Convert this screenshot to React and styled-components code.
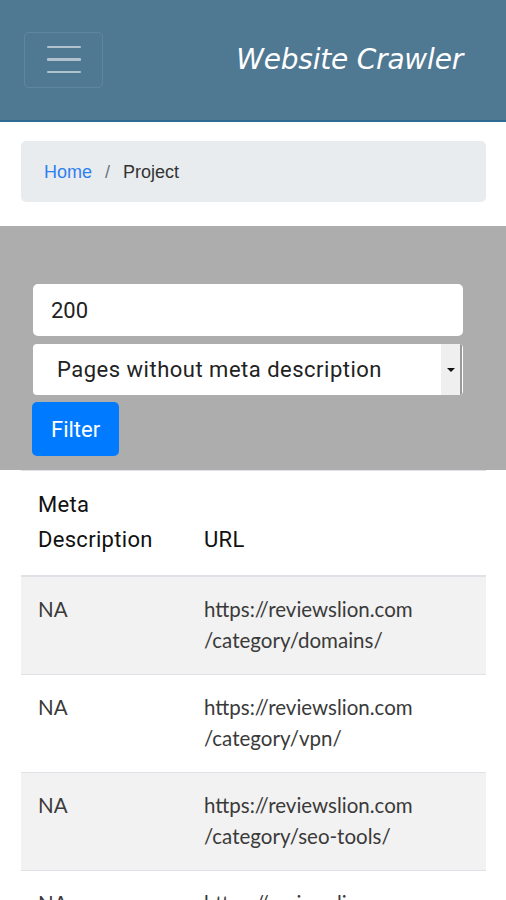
import React from "react";
import styled, { createGlobalStyle } from "styled-components";

const Global = createGlobalStyle`
  html, body { margin: 0; padding: 0; background: #fff; }
  body { font-family: Roboto, "Liberation Sans", Arial, sans-serif; color: #212529; }
  * { box-sizing: border-box; }
`;

const Header = styled.header`
  height: 122px;
  background: #4f7893;
  border-bottom: 2px solid #2f6a93;
  display: flex;
  align-items: center;
  justify-content: space-between;
  padding: 0 43px 0 24px;
`;

const Toggler = styled.button`
  width: 79px;
  height: 56px;
  border: 1px solid rgba(255, 255, 255, 0.1);
  border-radius: 5px;
  background: transparent;
  display: flex;
  flex-direction: column;
  justify-content: center;
  align-items: center;
  gap: 10px;
  padding: 0;
  margin-top: -1px;
`;

const Bar = styled.span`
  display: block;
  width: 34px;
  height: 2.5px;
  background: rgba(255, 255, 255, 0.55);
  border-radius: 1px;
`;

const Brand = styled.div`
  font-family: "DejaVu Sans", Verdana, sans-serif;
  font-style: italic;
  font-size: 28px;
  color: #fff;
  letter-spacing: -0.2px;
  margin-top: -2px;
`;

const Main = styled.main`
  padding-top: 19px;
`;

const Crumbs = styled.nav`
  margin: 0 20px 0 21px;
  height: 61px;
  background: #e9ecef;
  border-radius: 5px;
  display: flex;
  align-items: center;
  padding: 2px 23px 0;
  font-family: "Liberation Sans", Arial, sans-serif;
  font-size: 18px;
  color: #333;
`;

const CrumbLink = styled.a`
  color: #2f7ff0;
  text-decoration: none;
`;

const Sep = styled.span`
  color: #6c757d;
  padding: 0 13px;
`;

const FilterPanel = styled.section`
  margin-top: 24px;
  background: #adadad;
  padding: 58px 43px 14px 33px;
  display: flex;
  flex-direction: column;
  align-items: flex-start;
`;

const TextInput = styled.div`
  width: 100%;
  height: 52px;
  background: #fff;
  border-radius: 5px;
  display: flex;
  align-items: center;
  padding: 0 18px;
  font-size: 22px;
  color: #222;
`;

const Select = styled.div`
  width: 100%;
  height: 51px;
  margin-top: 8px;
  background: #fff;
  border-radius: 4px;
  display: flex;
  align-items: stretch;
  font-size: 22px;
  letter-spacing: 0.5px;
  color: #222;
  overflow: hidden;
`;

const SelectText = styled.div`
  flex: 1;
  display: flex;
  align-items: center;
  padding-left: 24px;
`;

const SelectArrow = styled.div`
  width: 21px;
  margin-right: 1px;
  background: #efefef;
  border-right: 2px solid #9a9a9a;
  display: flex;
  align-items: center;
  justify-content: center;
  &::after {
    content: "";
    border-left: 4px solid transparent;
    border-right: 4px solid transparent;
    border-top: 4px solid #111;
  }
`;

const Button = styled.button`
  margin-top: 7px;
  margin-left: -1px;
  height: 54px;
  padding: 0 19px;
  background: #007bff;
  color: #fff;
  border: none;
  border-radius: 5px;
  font-family: Roboto, sans-serif;
  font-size: 22px;
`;

const Table = styled.table`
  margin: 0 20px 0 21px;
  width: 465px;
  border-collapse: collapse;
  border-top: 1px solid #dee2e6;
`;

const Th = styled.th`
  text-align: left;
  vertical-align: bottom;
  font-weight: 400;
  font-size: 22px;
  letter-spacing: 0.3px;
  line-height: 35px;
  padding: 16px 17px 18px;
  border-bottom: 2px solid #dee2e6;
  color: #111;
  width: ${(p) => p.$w || "auto"};
`;

const Row = styled.tr`
  background: ${(p) => (p.$striped ? "#f2f2f2" : "#fff")};
  border-bottom: 1px solid #dee2e6;
`;

const Td = styled.td`
  vertical-align: top;
  font-family: Lato, "Open Sans", sans-serif;
  font-size: 20.5px;
  line-height: 31px;
  padding: 17px 17px 18px 17px;
  color: #3a3a3a;
`;

const rows = [
  "/category/domains/",
  "/category/vpn/",
  "/category/seo-tools/",
  "/category/hosting/",
];

export default function App() {
  return (
    <>
      <Global />
      <Header>
        <Toggler aria-label="Toggle navigation">
          <Bar />
          <Bar />
          <Bar />
        </Toggler>
        <Brand>Website Crawler</Brand>
      </Header>
      <Main>
        <Crumbs>
          <CrumbLink href="#">Home</CrumbLink>
          <Sep>/</Sep>
          <span>Project</span>
        </Crumbs>
        <FilterPanel>
          <TextInput>200</TextInput>
          <Select>
            <SelectText>Pages without meta description</SelectText>
            <SelectArrow />
          </Select>
          <Button>Filter</Button>
        </FilterPanel>
        <Table>
          <thead>
            <tr>
              <Th $w="166px">Meta Description</Th>
              <Th>URL</Th>
            </tr>
          </thead>
          <tbody>
            {rows.map((path, i) => (
              <Row key={path} $striped={i % 2 === 0}>
                <Td>NA</Td>
                <Td>
                  https://reviewslion.com
                  <wbr />
                  {path}
                </Td>
              </Row>
            ))}
          </tbody>
        </Table>
      </Main>
    </>
  );
}
